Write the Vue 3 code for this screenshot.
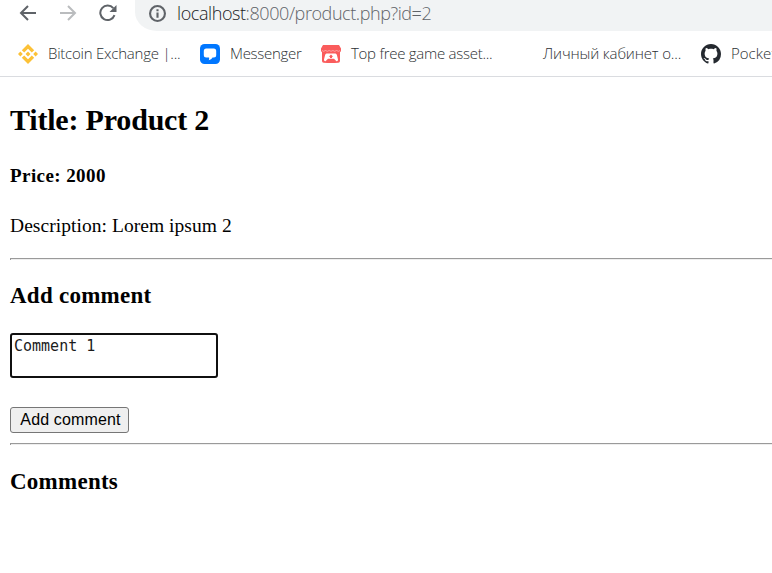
<script setup>
import { ref } from 'vue'

const comment = ref('Comment 1')
</script>

<template>
  <div class="window">
    <header class="chrome">
      <div class="toolbar">
        <svg class="nav back" viewBox="0 0 18 18"><path d="M17 9H2M9 2L2 9l7 7" /></svg>
        <svg class="nav forward" viewBox="0 0 18 18"><path d="M1 9h15M9 2l7 7-7 7" /></svg>
        <svg class="nav reload" viewBox="0 0 18 18">
          <path d="M15.500 11.200A7.300 7.300 0 1 1 14.300 4.200" />
          <path class="solid" d="M17.500 1v7h-7z" />
        </svg>
        <div class="address">
          <svg class="info" viewBox="0 0 16 16">
            <circle cx="8" cy="8" r="7" />
            <path d="M8 7v5M8 4v1.800" />
          </svg>
          <span class="url"><span class="host">localhost</span>:8000/product.php?id=2</span>
        </div>
      </div>
      <nav class="bookmarks">
        <a class="mark bitcoin">
          <svg viewBox="0 0 20 20" fill="#fcc137">
            <path d="M10 0l6.200 6.200-2.400 2.400L10 4.800 6.200 8.600 3.800 6.200zM10 20l6.200-6.200-2.400-2.400-3.800 3.800-3.800-3.800-2.400 2.400zM10 7.500l2.500 2.500-2.500 2.500L7.500 10zM2.400 7.600L4.800 10l-2.400 2.400L0 10zM17.600 7.600L20 10l-2.400 2.400-2.400-2.400z" />
          </svg>
          <span>Bitcoin Exchange |...</span>
        </a>
        <a class="mark messenger">
          <svg viewBox="0 0 20 20">
            <rect width="20" height="20" rx="4.500" fill="#07f" />
            <path fill="#fff" d="M6.300 4.500h7.400a2.500 2.500 0 0 1 2.500 2.500v4a2.500 2.500 0 0 1-2.500 2.500h-1.200c-.8 1.400-2 2.300-3.800 2.800.5-.8.6-1.800.4-2.800H6.300A2.500 2.500 0 0 1 3.800 11V7a2.500 2.500 0 0 1 2.500-2.500z" />
          </svg>
          <span>Messenger</span>
        </a>
        <a class="mark assets">
          <svg viewBox="0 0 20 20">
            <path fill="#fa5c5c" d="M2 1h16l2 3.500v1.800a2.300 2.300 0 0 1-1 2V17q0 1.700-1.700 1.800-7.300.5-14.600 0Q1 18.700 1 17V8.300a2.300 2.300 0 0 1-1-2V4.500z" />
            <path fill="none" stroke="#fff" stroke-opacity=".7" stroke-width=".6" d="M1 6.500q1.500 1.600 3.500 0 1.800 1.600 3.700 0 1.800 1.600 3.700 0 1.800 1.600 3.700 0 2 1.600 3.500 0" />
            <path fill="#fff" d="M5.500 9.500h9q1 0 1.400 1.500l1.100 4.500q.2 2-1.500 1.800L13 14.800H7l-2.500 2.500Q2.800 17.500 3 15.500L4.100 11q.4-1.500 1.400-1.500z" />
            <path fill="#fa5c5c" d="M10 10.500l2.200 2.300h-1.200v1.200H9v-1.200H7.800z" />
          </svg>
          <span>Top free game asset...</span>
        </a>
        <a class="mark cabinet"><span>Личный кабинет о...</span></a>
        <a class="mark github">
          <svg viewBox="0 0 16 16" fill="#24292f">
            <path d="M8 0C3.580 0 0 3.580 0 8c0 3.540 2.290 6.530 5.470 7.590.4.070.55-.17.55-.38 0-.19-.01-.82-.01-1.490-2.010.37-2.530-.49-2.690-.94-.09-.23-.48-.94-.82-1.130-.28-.15-.68-.52-.01-.53.63-.01 1.080.58 1.230.82.72 1.210 1.870.87 2.330.66.07-.52.28-.87.51-1.070-1.780-.2-3.640-.89-3.640-3.950 0-.87.31-1.590.82-2.150-.08-.2-.36-1.020.08-2.120 0 0 .67-.21 2.200.82.64-.18 1.320-.27 2-.27s1.360.09 2 .27c1.530-1.040 2.200-.82 2.200-.82.44 1.100.16 1.920.08 2.120.51.56.82 1.270.82 2.150 0 3.070-1.870 3.750-3.650 3.950.29.25.54.73.54 1.480 0 1.070-.01 1.930-.01 2.200 0 .21.15.46.55.38A8.010 8.010 0 0 0 16 8c0-4.420-3.580-8-8-8z" />
          </svg>
          <span>Pocket</span>
        </a>
      </nav>
    </header>

    <main class="page">
      <h1>Title: Product 2</h1>
      <h3>Price: 2000</h3>
      <p>Description: Lorem ipsum 2</p>
      <hr />
      <h2>Add comment</h2>
      <form @submit.prevent>
        <textarea v-model="comment" spellcheck="false"></textarea>
        <button type="submit"><span>Add comment</span></button>
      </form>
      <hr />
      <h2 class="list-title">Comments</h2>
    </main>
  </div>
</template>

<style>
body {
  background: #fff;
  overflow: hidden;
}
</style>

<style scoped>
.window {
  width: 772px;
  height: 573px;
  overflow: hidden;
  color: #000;
  font-family: "Liberation Serif", serif;
}
.chrome {
  box-sizing: border-box;
  height: 77px;
  border-bottom: 1px solid #dadce0;
  font-family: "Open Sans", sans-serif;
  font-weight: 300;
}
.toolbar {
  display: flex;
  height: 31px;
  padding-left: 19px;
}
.nav {
  flex: none;
  width: 18px;
  height: 18px;
  margin: 4px 22px 0 0;
  fill: none;
  stroke: #5f6368;
  stroke-width: 2;
}
.forward {
  stroke: #babcbe;
}
.reload {
  margin-right: 18px;
}
.nav .solid {
  fill: #5f6368;
  stroke: none;
}
.address {
  display: flex;
  flex: 1;
  height: 31px;
  padding-left: 14px;
  background: #f1f3f4;
  border-radius: 0 0 0 22px / 0 0 0 19px;
}
.info {
  flex: none;
  width: 17px;
  height: 17px;
  margin: 5px 11px 0 0;
  fill: none;
  stroke: #5f6368;
  stroke-width: 2;
}
.url {
  font-size: 18px;
  line-height: 27px;
  letter-spacing: -0.42px;
  color: #5f6368;
  white-space: nowrap;
}
.host {
  color: #202124;
}
.bookmarks {
  display: flex;
  height: 45px;
  padding-left: 18px;
}
.mark {
  display: flex;
  flex: none;
  align-items: center;
  gap: 10px;
  color: #2c3033;
  font-size: 15px;
  white-space: nowrap;
}
.mark svg {
  flex: none;
  width: 20px;
  height: 20px;
}
.mark span {
  margin-top: -1px;
}
.bitcoin { width: 182px; letter-spacing: -0.23px; }
.messenger { width: 121px; letter-spacing: -0.3px; }
.assets { width: 222px; letter-spacing: -0.27px; }
.cabinet { width: 158px; letter-spacing: -0.14px; }
.page {
  padding-left: 10px;
}
h1, h2, h3, p {
  margin: 0;
  white-space: nowrap;
}
h1 {
  padding-top: 26px;
  font-size: 30px;
  line-height: 34px;
  letter-spacing: -0.19px;
}
h3 {
  padding-top: 28px;
  font-size: 19px;
  line-height: 22px;
  letter-spacing: 0.42px;
}
p {
  padding-top: 28px;
  font-size: 19.5px;
  line-height: 22px;
  letter-spacing: 0.05px;
}
hr {
  height: 1px;
  margin: 21px 0 0;
  border: 0;
  border-top: 1px solid #9a9a9a;
  border-left: 1px solid #9a9a9a;
  background: #eee;
}
h2 {
  padding-top: 23px;
  font-size: 23px;
  line-height: 26px;
  letter-spacing: 0.25px;
}
form {
  display: flex;
  flex-direction: column;
  align-items: flex-start;
  padding-top: 24px;
}
textarea {
  box-sizing: border-box;
  width: 208px;
  height: 45px;
  margin: 0;
  padding: 3px 2px 2px;
  border: 2px solid #101010;
  border-radius: 3px;
  outline: 0;
  resize: none;
  overflow: hidden;
  background: #fff;
  color: #1c1c1c;
  font: 15px/17px "DejaVu Sans Mono", monospace;
}
button {
  box-sizing: border-box;
  width: 119px;
  height: 26px;
  margin: 29px 0 0;
  padding: 0 0 0 2px;
  border: 1px solid #767676;
  border-radius: 3px;
  background: #efefef;
  color: #000;
  font: 16px/22px "Liberation Sans", sans-serif;
  letter-spacing: 0.15px;
  white-space: nowrap;
}
form + hr {
  margin-top: 10px;
}
.list-title {
  padding-top: 24px;
}
</style>
